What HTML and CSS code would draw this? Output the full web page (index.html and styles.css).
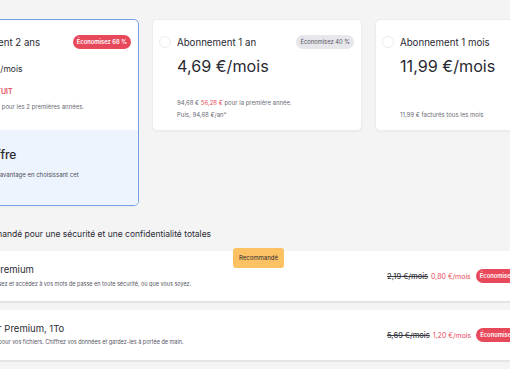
FILE: index.html
```html
<!DOCTYPE html>
<html lang="fr">
<head>
    <meta charset="UTF-8">
    <meta name="viewport" content="width=device-width, initial-scale=1.0">
    <title>Choisissez votre abonnement</title>
    <link rel="stylesheet" href="styles.css">
</head>
<body>
    <main class="page">
        <div class="plans">
            <div class="plan selected">
                <div class="plan-main">
                    <div class="plan-head">
                        <span class="radio checked"></span>
                        <span class="plan-name">Abonnement 2 ans</span>
                        <span class="save hot">Économisez 68 %</span>
                    </div>
                    <div class="price">3,69 €<small>/mois</small></div>
                    <div class="promo">+3 MOIS GRATUIT</div>
                    <div class="fine first">287,76 € <em>88,56 €</em> pour les 2 premières années.</div>
                </div>
                <div class="plan-extra">
                    <h3>Notre offre</h3>
                    <p>Bénéficiez d'un avantage en choisissant cet abonnement.</p>
                </div>
            </div>

            <div class="plan">
                <div class="plan-main">
                    <div class="plan-head">
                        <span class="radio"></span>
                        <span class="plan-name">Abonnement 1 an</span>
                        <span class="save">Économisez 40 %</span>
                    </div>
                    <div class="price">4,69 €/mois</div>
                    <div class="fine">94,68 € <em>56,28 €</em> pour la première année.<br>Puis, 94,68 €/an*</div>
                </div>
            </div>

            <div class="plan">
                <div class="plan-main">
                    <div class="plan-head">
                        <span class="radio"></span>
                        <span class="plan-name">Abonnement 1 mois</span>
                    </div>
                    <div class="price">11,99 €/mois</div>
                    <div class="fine">11,99 € facturés tous les mois</div>
                </div>
            </div>
        </div>

        <h2 class="addons-title">Recommandé pour une sécurité et une confidentialité totales</h2>

        <div class="addon">
            <span class="tag">Recommandé</span>
            <div class="addon-text">
                <h4 class="lead">NordPass<small>®</small> Premium</h4>
                <p>Stockez, synchronisez et accédez à vos mots de passe en toute sécurité, où que vous soyez.</p>
            </div>
            <div class="addon-price">
                <s>2,19 €/mois</s>
                <span class="new">0,80 €/mois</span>
                <span class="save hot">Économisez 63 %</span>
            </div>
        </div>

        <div class="addon">
            <div class="addon-text">
                <h4>NordLocker Premium, 1To</h4>
                <p>Stockage sécurisé pour vos fichiers. Chiffrez vos données et gardez-les à portée de main.</p>
            </div>
            <div class="addon-price">
                <s>5,69 €/mois</s>
                <span class="new">1,20 €/mois</span>
                <span class="save hot">Économisez 79 %</span>
            </div>
        </div>
    </main>
</body>
</html>
```

FILE: styles.css
```css
body {
    margin: 0;
    background-color: #f4f4f5;
    font-family: Inter, "Noto Sans", sans-serif;
    color: #2a2a33;
    overflow: hidden;
}

/* the view is scrolled a little to the right */
.page {
    margin-left: -71px;
    width: 654px;
    padding-top: 19px;
}

.plans {
    display: grid;
    grid-template-columns: repeat(3, 210px);
    column-gap: 13px;
    align-items: start;
}

.plan {
    background: #fff;
    border: 1px solid #ececef;
    border-radius: 5px;
    box-shadow: 0 1px 2px rgba(0, 0, 0, 0.04);
    overflow: hidden;
}

.plan.selected {
    border-color: #76a1e2;
}

.plan-main {
    height: 110px;
    box-sizing: border-box;
    padding: 14px 7px 9px 6px;
    display: flex;
    flex-direction: column;
}

.plan-head {
    display: flex;
    align-items: center;
    gap: 6px;
    height: 16px;
}

.radio {
    width: 12px;
    height: 12px;
    box-sizing: border-box;
    border: 1px solid #ececef;
    border-radius: 50%;
}

.radio.checked {
    border: 3px solid #3e6fd8;
}

.plan-name {
    flex: 1;
    font-size: 9.7px;
}

.save {
    height: 14px;
    line-height: 14px;
    padding: 0 4px;
    border-radius: 7px;
    background: #e7e7eb;
    color: #55555f;
    font-size: 5.8px;
    white-space: nowrap;
}

.save.hot {
    background: #e8495a;
    color: #fff;
    font-weight: 600;
}

.price {
    margin: 5px 0 0 18px;
    font-size: 16.2px;
    line-height: 22px;
}

.price small {
    font-size: 8.5px;
}

.promo {
    margin: 7px 0 0 18px;
    font-size: 7px;
    line-height: 10px;
    font-weight: 600;
    color: #e8495a;
}

.fine {
    margin-top: auto;
    padding-left: 18px;
    font-size: 6px;
    line-height: 12px;
    color: #6b6b75;
}

.fine.first {
    margin-top: 4px;
}

.fine em {
    font-style: normal;
    color: #e8495a;
}

/* the chosen plan shows its price block a little further left */
.selected .price {
    margin-left: 15px;
}

.selected .fine {
    margin-left: -2px;
}

.selected .promo {
    margin-left: 15px;
}

.plan-extra {
    height: 75px;
    box-sizing: border-box;
    padding: 17px 7px 0 24px;
    background: #eef4fd;
}

.plan-extra h3 {
    margin: 0;
    font-size: 12px;
    line-height: 16px;
    font-weight: 500;
}

.plan-extra p {
    margin: 7px 0 0;
    width: 150px;
    font-size: 6px;
    line-height: 10px;
    color: #4a4a55;
}

.addons-title {
    margin: 22px 0 11px 38px;
    font-size: 8.5px;
    line-height: 12px;
    font-weight: 400;
}

.addon {
    position: relative;
    display: flex;
    align-items: center;
    height: 50px;
    padding: 0 49px 0 20px;
    margin-bottom: 7px;
    background: #fff;
    border-bottom: 2px solid #e4e4e7;
}

.tag {
    position: absolute;
    left: 304px;
    top: -3px;
    height: 20px;
    line-height: 20px;
    padding: 0 6px;
    border-radius: 3px;
    background: #fbc163;
    font-size: 6px;
}

.addon-text h4 {
    margin: 0;
    font-size: 9.5px;
    line-height: 12px;
    font-weight: 400;
}

.addon-text h4.lead {
    margin-left: -5px;
}

.addon-text h4 small {
    font-size: 6px;
}

.addon-text p {
    margin: 3px 0 0;
    font-size: 5.5px;
    line-height: 9px;
    color: #55555f;
}

.addon-price {
    margin-left: auto;
    display: flex;
    align-items: center;
    white-space: nowrap;
}

.addon-price s {
    font-size: 7.5px;
    font-weight: 500;
    color: #3a3a42;
}

.addon-price .new {
    margin: 0 5px 0 3px;
    font-size: 7px;
    color: #e8495a;
}
```
